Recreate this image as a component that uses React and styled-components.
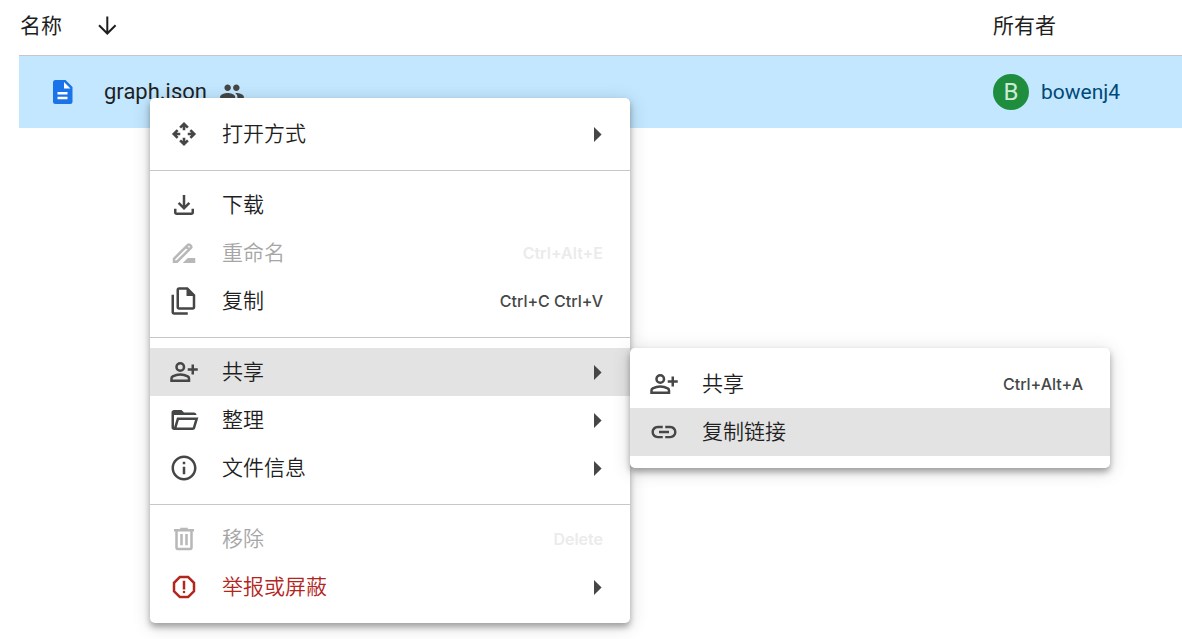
import React from "react";
import styled, { createGlobalStyle, css } from "styled-components";
import { MdGroup, MdLink, MdOutlineInfo, MdOutlineReport } from "react-icons/md";

const Colors = {
  TEXT: "#1f1f1f",
  ICON: "#444746",
  SELECTED: "#c2e7ff",
  SELECTED_TEXT: "#004a77",
  LINE: "#c7c7c7",
  HOVER: "#e3e3e3",
  DANGER: "#b3261e",
  BLUE: "#1a73e8",
  GREEN: "#1e8e3e"
};

const GlobalStyle = createGlobalStyle`
  body {
    margin: 0;
    background: #fff;
    color: ${Colors.TEXT};
    font-family: Inter, "Noto Sans CJK SC", sans-serif;
    font-size: 21px;
  }
`;

const Page = styled.main`
  position: relative;
  min-height: 100vh;
  padding-left: 19px;
  box-sizing: border-box;
  overflow: hidden;
`;

const FileTable = styled.table`
  width: 100%;
  border-collapse: collapse;
  table-layout: fixed;
`;

const HeadCell = styled.th`
  width: ${props => props.$width || "auto"};
  height: 55px;
  padding: 0 0 2px 1px;
  box-sizing: border-box;
  border-bottom: 1px solid ${Colors.LINE};
  font-weight: 400;
  line-height: 30px;
  text-align: left;

  &:last-child {
    padding-left: 0;
  }
`;

const SortButton = styled.button`
  display: inline-flex;
  align-items: center;
  gap: 34px;
  padding: 0;
  border: 0;
  background: none;
  color: inherit;
  font: inherit;
`;

const FileRow = styled.tr`
  background: ${Colors.SELECTED};
`;

const Cell = styled.td`
  height: 72px;
  padding: 0;
`;

const FileName = styled.div`
  display: flex;
  align-items: center;
  padding-left: 34px;
  font-family: Roboto, "Noto Sans CJK SC", sans-serif;
  font-size: 22px;

  & > span {
    margin: 0 12px 0 31px;
  }
`;

const Owner = styled.div`
  display: flex;
  align-items: center;
  gap: 12px;
  color: ${Colors.SELECTED_TEXT};
  font-family: Roboto, "Noto Sans CJK SC", sans-serif;
`;

const Avatar = styled.span`
  display: flex;
  align-items: center;
  justify-content: center;
  width: 36px;
  height: 36px;
  border-radius: 50%;
  background: ${Colors.GREEN};
  color: #ceead6;
  font-size: 24px;
`;

const MenuPanel = styled.ul`
  position: absolute;
  z-index: 1;
  width: 480px;
  margin: 0;
  padding: 0;
  list-style: none;
  border-radius: 5px;
  background: #fff;
  box-shadow: 0 4px 6px rgba(0, 0, 0, 0.32), 0 3px 18px 2px rgba(0, 0, 0, 0.12);
`;

const ContextMenu = styled(MenuPanel)`
  top: 98px;
  left: 150px;
  padding-top: 2px;
`;

const Submenu = styled(MenuPanel)`
  top: 0;
  left: 100%;
  padding: 12px 0;
`;

const Group = styled.ul`
  margin: 0;
  padding: 10px 0 12px;
  list-style: none;
`;

const GroupItem = styled.li`
  & + & {
    border-top: 1px solid ${Colors.LINE};
  }
`;

const Item = styled.li`
  position: relative;
`;

const ItemButton = styled.button`
  display: flex;
  align-items: center;
  width: 100%;
  height: 48px;
  padding: 0 27px 0 19px;
  border: 0;
  background: ${props => (props.$active ? Colors.HOVER : "transparent")};
  color: ${props => (props.$danger ? Colors.DANGER : Colors.TEXT)};
  font: inherit;
  font-weight: 350;
  line-height: 30px;
  text-align: left;

  & > svg:first-child {
    flex: none;
    color: ${props => (props.$danger ? Colors.DANGER : Colors.ICON)};
  }

  ${props =>
    props.disabled &&
    css`
      color: #a6a6a6;

      & > svg:first-child {
        opacity: 0.38;
      }
    `}
`;

const ItemLabel = styled.span`
  flex: 1;
  padding-left: 23px;
`;

const Shortcut = styled.span`
  color: ${props => (props.$disabled ? "#ebebeb" : Colors.ICON)};
  font-size: 16px;
  font-weight: ${props => (props.$disabled ? 600 : 500)};
`;

const Icon = ({ children, size = 30, box = "0 0 24 24" }) => (
  <svg width={size} height={size} viewBox={box} fill="currentColor" aria-hidden="true">
    {children}
  </svg>
);

const ArrowRight = () => (
  <svg width="9" height="16" viewBox="0 0 9 16" fill={Colors.ICON} aria-hidden="true">
    <path d="M0 1 7.600 8.500 0 16z" />
  </svg>
);

const SortArrow = () => (
  <svg width="22" height="22" viewBox="0 0 22 22" fill="none" stroke="currentColor" strokeWidth="2" aria-hidden="true">
    <path d="M11.300 1.500v17M3 10.200l8.300 8.300 8.300-8.300" />
  </svg>
);

const DocIcon = () => (
  <svg width="20" height="24" viewBox="0 0 20 24" aria-hidden="true">
    <path fill={Colors.BLUE} d="M2.500 0H12.500L19.500 7V21.500A2.500 2.500 0 0 1 17 24H2.500A2.500 2.500 0 0 1 0 21.500V2.500A2.500 2.500 0 0 1 2.500 0z" />
    <path fill="#fff" d="M11 2v6.500h6.500zM4.500 12h10v2.500h-10zM4.500 16.800h10v2.500h-10z" />
  </svg>
);

const OpenWithIcon = () => (
  <Icon>
    <g fill="none" stroke="currentColor" strokeWidth="2.100">
      <path d="M12 9V4M8.900 6.900 12 3.800l3.100 3.100M12 15v5M8.900 17.100l3.100 3.100 3.100-3.100" />
      <path d="M9 12H4M6.900 8.900 3.800 12l3.100 3.100M15 12h5M17.100 8.900l3.100 3.100-3.100 3.100" />
    </g>
  </Icon>
);

const DownloadIcon = () => (
  <Icon>
    <path d="M12 16 7 11l1.400-1.450 2.600 2.600V4h2v8.150l2.600-2.600L17 11zM6 20q-.825 0-1.412-.587T4 18v-3h2v3h12v-3h2v3q0 .825-.587 1.413T18 20z" />
  </Icon>
);

const RenameIcon = () => (
  <Icon>
    <path d="M15 16l-4 4h10v-4z" />
    <path
      fill="none"
      stroke="currentColor"
      strokeWidth="2"
      d="M4 19v-2.400L15.100 5.500q.8-.7 1.600 0l.8.8q.7.8 0 1.600L6.400 19zM13.700 6.900l2.400 2.400"
    />
  </Icon>
);

const CopyIcon = () => (
  <Icon>
    <path d="M19 19H8q-.825 0-1.413-.588T6 17V3q0-.825.588-1.413T8 1h7l6 6v10q0 .825-.588 1.413T19 19zM14 8V3H8v14h11V8zM4 23q-.825 0-1.413-.588T2 21V7h2v14h11v2z" />
  </Icon>
);

const PersonAddIcon = () => (
  <Icon>
    <g fill="none" stroke="currentColor" strokeWidth="2">
      <circle cx="9" cy="8" r="3" />
      <path d="M2 19v-1.800q0-1.100 1-1.700Q5.900 14 9 14t6 1.500q1 .6 1 1.700V19zM19 6v8M15 10h8" />
    </g>
  </Icon>
);

const FolderIcon = () => (
  <Icon>
    <path d="M4 20q-.825 0-1.413-.588T2 18V6q0-.825.588-1.413T4 4h6l2 2h8q.825 0 1.413.588T22 8H4v10l2.400-8h17.100l-2.575 8.575q-.2.650-.737 1.038T19 20zm2.100-2H19l1.800-6H7.900z" />
  </Icon>
);

const TrashIcon = () => (
  <Icon>
    <path d="M7 21q-.825 0-1.413-.588T5 19V6H4V4h5V3h6v1h5v2h-1v13q0 .825-.588 1.413T17 21zM17 6H7v13h10zM9 17h2V8H9zM13 17h2V8h-2z" fillRule="evenodd" />
  </Icon>
);

const InfoIcon = () => <MdOutlineInfo size={30} />;
const ReportIcon = () => <MdOutlineReport size={30} />;
const LinkIcon = () => <MdLink size={30} />;

const shareItems = [
  { label: "共享", icon: PersonAddIcon, shortcut: "Ctrl+Alt+A" },
  { label: "复制链接", icon: LinkIcon, active: true }
];

const menuGroups = [
  [{ label: "打开方式", icon: OpenWithIcon, more: true }],
  [
    { label: "下载", icon: DownloadIcon },
    { label: "重命名", icon: RenameIcon, shortcut: "Ctrl+Alt+E", disabled: true },
    { label: "复制", icon: CopyIcon, shortcut: "Ctrl+C Ctrl+V" }
  ],
  [
    { label: "共享", icon: PersonAddIcon, more: true, active: true, items: shareItems },
    { label: "整理", icon: FolderIcon, more: true },
    { label: "文件信息", icon: InfoIcon, more: true }
  ],
  [
    { label: "移除", icon: TrashIcon, shortcut: "Delete", disabled: true },
    { label: "举报或屏蔽", icon: ReportIcon, more: true, danger: true }
  ]
];

const MenuItem = ({ item }) => {
  const ItemIcon = item.icon;
  return (
    <Item>
      <ItemButton
        type="button"
        disabled={item.disabled}
        $active={item.active}
        $danger={item.danger}
      >
        <ItemIcon />
        <ItemLabel>{item.label}</ItemLabel>
        {item.shortcut && (
          <Shortcut $disabled={item.disabled}>{item.shortcut}</Shortcut>
        )}
        {item.more && <ArrowRight />}
      </ItemButton>
      {item.items && (
        <Submenu>
          {item.items.map(child => (
            <MenuItem key={child.label} item={child} />
          ))}
        </Submenu>
      )}
    </Item>
  );
};

const App = () => (
  <Page>
    <GlobalStyle />
    <FileTable>
      <thead>
        <tr>
          <HeadCell>
            <SortButton type="button">
              名称
              <SortArrow />
            </SortButton>
          </HeadCell>
          <HeadCell $width="189px">所有者</HeadCell>
        </tr>
      </thead>
      <tbody>
        <FileRow>
          <Cell>
            <FileName>
              <DocIcon />
              <span>graph.json</span>
              <MdGroup size={26} color={Colors.ICON} />
            </FileName>
          </Cell>
          <Cell>
            <Owner>
              <Avatar>B</Avatar>
              bowenj4
            </Owner>
          </Cell>
        </FileRow>
      </tbody>
    </FileTable>
    <ContextMenu>
      {menuGroups.map((group, index) => (
        <GroupItem key={index}>
          <Group>
            {group.map(item => (
              <MenuItem key={item.label} item={item} />
            ))}
          </Group>
        </GroupItem>
      ))}
    </ContextMenu>
  </Page>
);

export default App;
